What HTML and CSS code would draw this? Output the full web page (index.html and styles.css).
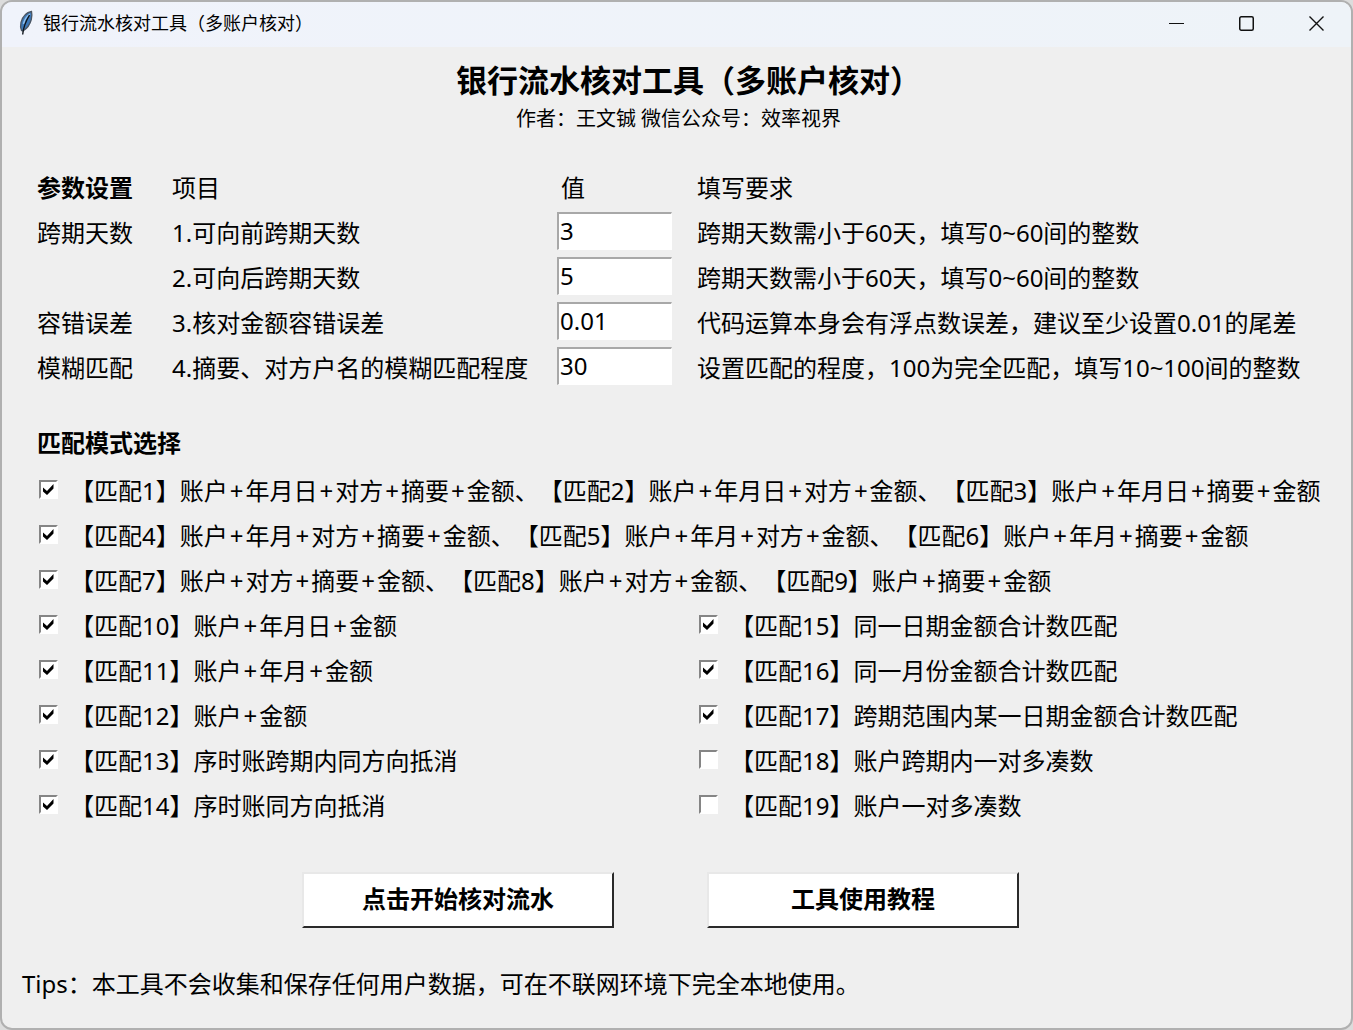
FILE: index.html
```html
<!DOCTYPE html>
<html lang="zh-CN">
<head>
<meta charset="utf-8">
<title>银行流水核对工具（多账户核对）</title>
<link rel="stylesheet" href="styles.css">
</head>
<body>
<div class="window">
  <header class="titlebar">
    <svg class="feather" width="16" height="26" viewBox="0 0 16 26" aria-hidden="true">
      <path d="M13.500 1.500C8.500 2.500 4.500 7 3 12.500C2.300 15.500 2.300 18 3.500 20.500L5 21C9 18.500 12 14.500 13.300 9.500C14 6.500 14 3.500 13.500 1.500Z" fill="#3d78b8" stroke="#4a5563" stroke-width="1.300"/>
      <path d="M12 4C9 6 6.500 9.500 5.500 14" fill="none" stroke="#8fc0ee" stroke-width="1.500"/>
      <path d="M11.500 5C8.500 10 5.500 15 4.700 24.500" fill="none" stroke="#10151c" stroke-width="1.400"/>
    </svg>
    <span class="caption">银行流水核对工具（多账户核对）</span>
    <div class="controls">
      <button class="control" aria-label="最小化"><svg width="17" height="17" viewBox="0 0 17 17"><path d="M1 8.500H16" fill="none" stroke="#111"/></svg></button>
      <button class="control" aria-label="最大化"><svg width="17" height="17" viewBox="0 0 17 17"><rect x="1.750" y="1.750" width="13.500" height="13.500" rx="1.500" fill="none" stroke="#111" stroke-width="1.500"/></svg></button>
      <button class="control" aria-label="关闭"><svg width="17" height="17" viewBox="0 0 17 17"><path d="M1.500 1.500L15.500 15.500M15.500 1.500L1.500 15.500" fill="none" stroke="#111" stroke-width="1.400"/></svg></button>
    </div>
  </header>

  <main class="content">
    <h1 class="title">银行流水核对工具（多账户核对）</h1>
    <p class="author">作者：王文铖 微信公众号：效率视界</p>

    <table class="params">
      <thead>
        <tr><th class="group strong">参数设置</th><th class="item">项目</th><th class="value head">值</th><th>填写要求</th></tr>
      </thead>
      <tbody>
        <tr><td>跨期天数</td><td><label for="before">1.可向前跨期天数</label></td><td><input class="entry" id="before" type="text" value="3"></td><td>跨期天数需小于60天，填写0~60间的整数</td></tr>
        <tr><td></td><td><label for="after">2.可向后跨期天数</label></td><td><input class="entry" id="after" type="text" value="5"></td><td>跨期天数需小于60天，填写0~60间的整数</td></tr>
        <tr><td>容错误差</td><td><label for="error">3.核对金额容错误差</label></td><td><input class="entry" id="error" type="text" value="0.01"></td><td>代码运算本身会有浮点数误差，建议至少设置0.01的尾差</td></tr>
        <tr><td>模糊匹配</td><td><label for="fuzzy">4.摘要、对方户名的模糊匹配程度</label></td><td><input class="entry" id="fuzzy" type="text" value="30"></td><td>设置匹配的程度，100为完全匹配，填写10~100间的整数</td></tr>
      </tbody>
    </table>

    <h2 class="section">匹配模式选择</h2>
    <div class="modes">
      <label class="mode wide"><input type="checkbox" checked><span>【匹配1】账户<i>+</i>年月日<i>+</i>对方<i>+</i>摘要<i>+</i>金额、【匹配2】账户<i>+</i>年月日<i>+</i>对方<i>+</i>金额、【匹配3】账户<i>+</i>年月日<i>+</i>摘要<i>+</i>金额</span></label>
      <label class="mode wide"><input type="checkbox" checked><span>【匹配4】账户<i>+</i>年月<i>+</i>对方<i>+</i>摘要<i>+</i>金额、【匹配5】账户<i>+</i>年月<i>+</i>对方<i>+</i>金额、【匹配6】账户<i>+</i>年月<i>+</i>摘要<i>+</i>金额</span></label>
      <label class="mode wide"><input type="checkbox" checked><span>【匹配7】账户<i>+</i>对方<i>+</i>摘要<i>+</i>金额、【匹配8】账户<i>+</i>对方<i>+</i>金额、【匹配9】账户<i>+</i>摘要<i>+</i>金额</span></label>
      <label class="mode"><input type="checkbox" checked><span>【匹配10】账户<i>+</i>年月日<i>+</i>金额</span></label>
      <label class="mode"><input type="checkbox" checked><span>【匹配15】同一日期金额合计数匹配</span></label>
      <label class="mode"><input type="checkbox" checked><span>【匹配11】账户<i>+</i>年月<i>+</i>金额</span></label>
      <label class="mode"><input type="checkbox" checked><span>【匹配16】同一月份金额合计数匹配</span></label>
      <label class="mode"><input type="checkbox" checked><span>【匹配12】账户<i>+</i>金额</span></label>
      <label class="mode"><input type="checkbox" checked><span>【匹配17】跨期范围内某一日期金额合计数匹配</span></label>
      <label class="mode"><input type="checkbox" checked><span>【匹配13】序时账跨期内同方向抵消</span></label>
      <label class="mode"><input type="checkbox"><span>【匹配18】账户跨期内一对多凑数</span></label>
      <label class="mode"><input type="checkbox" checked><span>【匹配14】序时账同方向抵消</span></label>
      <label class="mode"><input type="checkbox"><span>【匹配19】账户一对多凑数</span></label>
    </div>

    <div class="actions">
      <button class="action">点击开始核对流水</button>
      <button class="action">工具使用教程</button>
    </div>

    <p class="tips">Tips：本工具不会收集和保存任何用户数据，可在不联网环境下完全本地使用。</p>
  </main>
</div>
</body>
</html>
```
FILE: styles.css
```css
* { box-sizing: border-box; }

body {
  margin: 0;
  background: #dcdcdc;
  color: #000;
  font: 24px/42px "Noto Sans", "Noto Sans CJK SC", sans-serif;
  text-spacing-trim: space-all;
}

button, input { font: inherit; color: inherit; }

.window {
  min-height: 100vh;
  border: 2px solid #b0b0b0;
  border-radius: 12px;
  background: #efefef;
  overflow: hidden;
}

.titlebar {
  display: flex;
  align-items: flex-start;
  height: 45px;
  padding-left: 16px;
  background: linear-gradient(90deg, #f0f3fb, #eef3f8);
}

.feather { margin-top: 8px; }

.caption {
  flex: 1;
  margin-left: 9px;
  font-size: 18px;
  line-height: 42px;
}

.controls { display: flex; }

.control {
  display: grid;
  place-items: center;
  width: 70px;
  height: 43px;
  padding: 0;
  border: 0;
  background: none;
}

.content { padding: 10px 20px; }

.title {
  margin: 0;
  padding-left: 24px;
  font-size: 31px;
  line-height: 46px;
  font-weight: 700;
  text-align: center;
}

.author {
  margin: 0;
  padding-left: 4px;
  font-size: 20px;
  line-height: 32px;
  text-align: center;
}

.params {
  width: 100%;
  margin: 32px 0 0 15px;
  border-collapse: collapse;
  table-layout: fixed;
  white-space: nowrap;
}

.params th, .params td {
  height: 45px;
  padding: 0;
  font-weight: 400;
  text-align: left;
  vertical-align: top;
}

.params .strong { font-weight: 700; }
.params .group { width: 135px; }
.params .item { width: 385px; }
.params .value { width: 140px; }
.params .head { padding-left: 4px; }

.entry {
  display: block;
  width: 115px;
  height: 38px;
  padding: 0 1px 1px;
  border: 2px solid #fff;
  border-top-color: #a8a8a8;
  border-left-color: #a8a8a8;
  border-width: 2px 1px 1px 2px;
  border-radius: 0;
  background: #fff;
}

.section {
  margin: 30px 0 0 15px;
  font-size: 24px;
  line-height: 42px;
  font-weight: 700;
}

.modes {
  display: grid;
  grid-template-columns: 660px 1fr;
  grid-auto-rows: 45px;
  margin: 6px 0 0 17px;
}

.mode {
  display: flex;
  align-items: flex-start;
  gap: 12px;
  white-space: nowrap;
}

.wide { grid-column: 1 / -1; }

.mode i {
  padding: 0 2px;
  font-style: normal;
}

.mode input {
  appearance: none;
  flex: none;
  width: 19px;
  height: 19px;
  margin: 10px 0 0;
  border: 2px solid #fff;
  border-top-color: #858585;
  border-left-color: #858585;
  background: #fff;
}

.mode input:checked {
  background: #fff url("data:image/svg+xml,%3Csvg xmlns='http://www.w3.org/2000/svg' viewBox='0 0 15 15'%3E%3Cpath d='M2 5.500L6 9L12.500 2V6.500L6 13L2 9.500Z'/%3E%3C/svg%3E") center / 15px 15px no-repeat;
}

.actions {
  display: flex;
  justify-content: center;
  gap: 93px;
  margin-top: 42px;
  padding-right: 32px;
}

.action {
  width: 312px;
  height: 56px;
  padding: 0 0 2px;
  border: 2px solid;
  border-color: #e8e8e8 #2a2a2a #2a2a2a #e8e8e8;
  border-radius: 0;
  background: #fff;
  font-weight: 700;
}

.tips { margin: 35px 0 0; }
```
